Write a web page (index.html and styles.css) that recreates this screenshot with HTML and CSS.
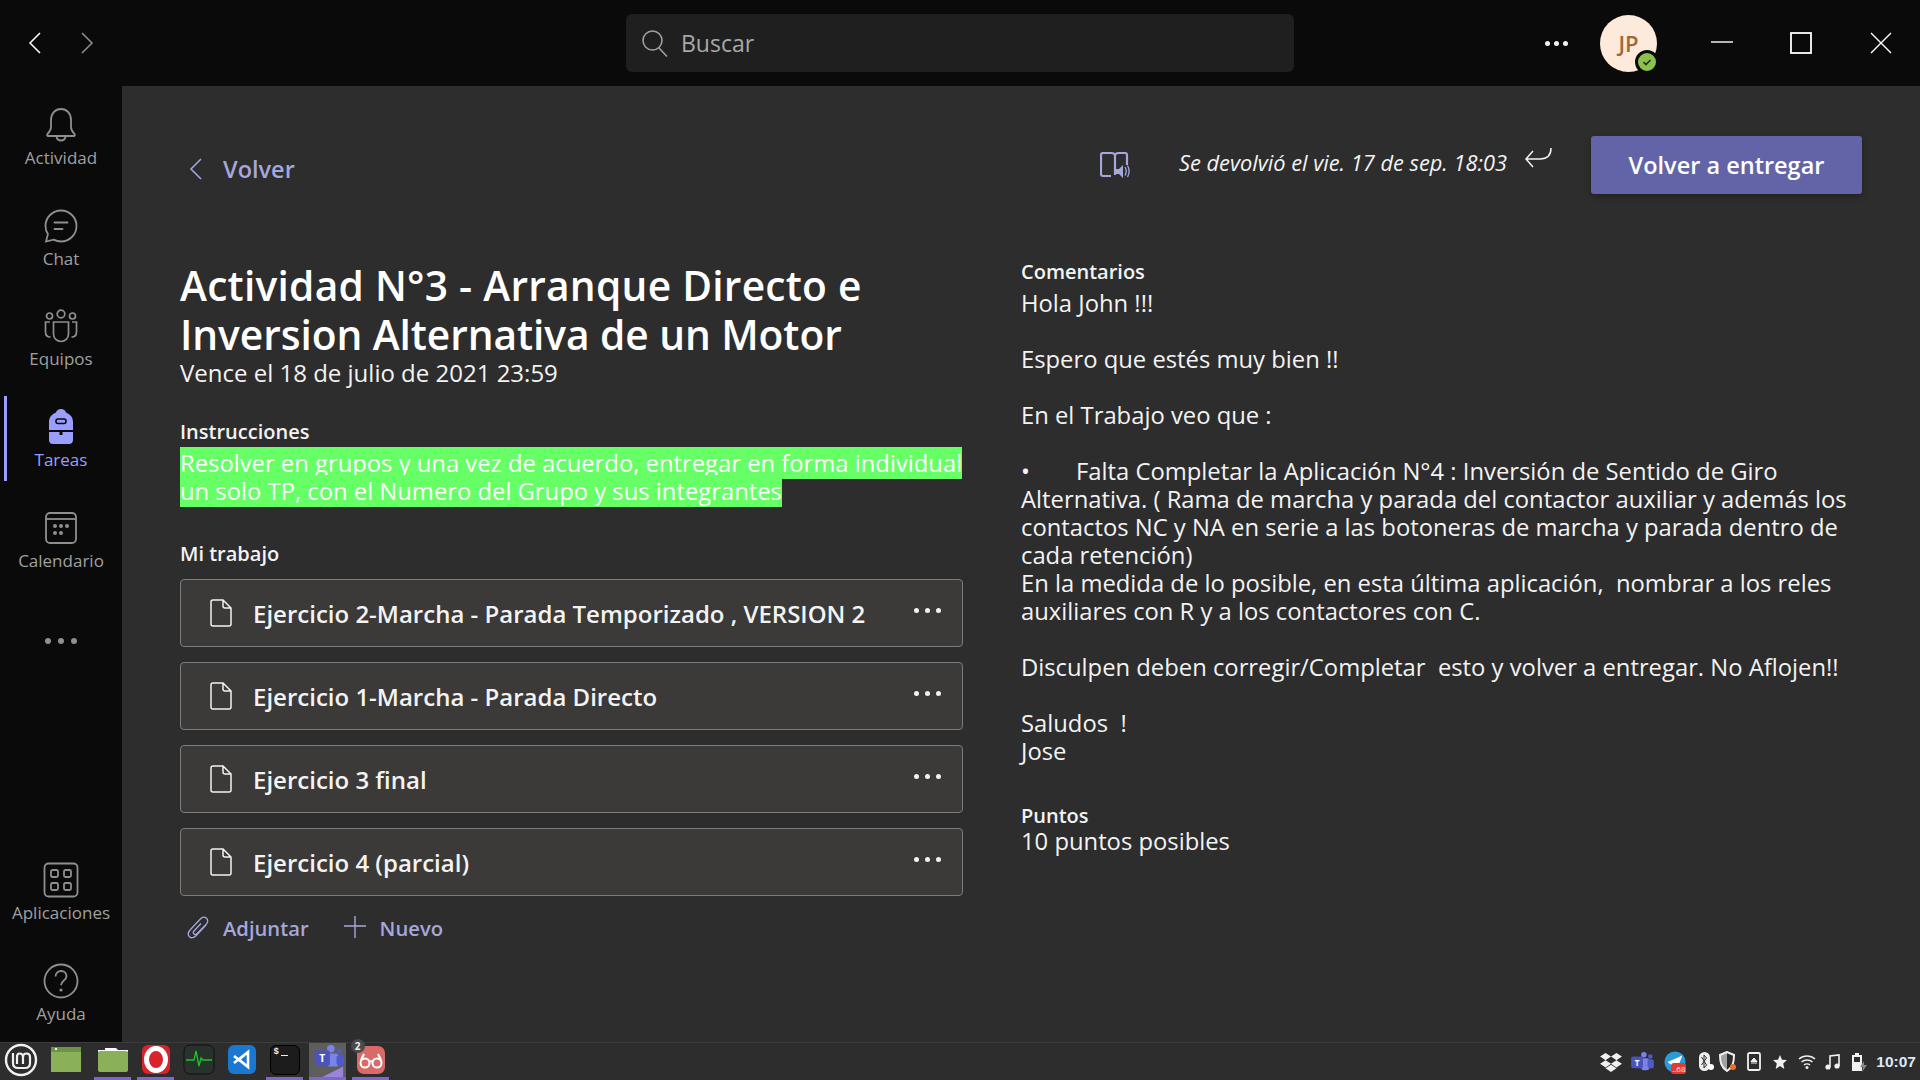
FILE: index.html
```html
<!DOCTYPE html>
<html lang="es">
<head>
<meta charset="utf-8">
<title>Tareas</title>
<link rel="stylesheet" href="styles.css">
</head>
<body>
<div class="app">
  <header class="topbar">
    <div class="history">
      <svg class="hist-ic" viewBox="0 0 14 24"><path d="M12 2 2 12l10 10" fill="none" stroke="#fff" stroke-width="1.5"/></svg>
      <svg class="hist-ic" viewBox="0 0 14 24"><path d="M2 2l10 10L2 22" fill="none" stroke="#8f8f8f" stroke-width="1.5"/></svg>
    </div>
    <div class="search">
      <svg class="search-ic" viewBox="0 0 28 28"><circle cx="11.500" cy="11.500" r="9.500" fill="none" stroke="#a0a0a0" stroke-width="1.600"/><path d="M18 19l8 8.500" stroke="#a0a0a0" stroke-width="1.600"/></svg>
      <span>Buscar</span>
    </div>
    <div class="win">
      <div class="more"><i></i><i></i><i></i></div>
      <div class="avatar">JP
        <span class="presence"><svg viewBox="0 0 12 12"><path d="M2.500 6.200 5 8.500l4.500-4.500" fill="none" stroke="#2d2d2d" stroke-width="1.700"/></svg></span>
      </div>
      <svg class="win-ic min" viewBox="0 0 22 22"><path d="M0 10h22" stroke="#fff" stroke-width="1.400"/></svg>
      <svg class="win-ic max" viewBox="0 0 22 22"><rect x="1" y="1" width="20" height="20" fill="none" stroke="#fff" stroke-width="1.800"/></svg>
      <svg class="win-ic close" viewBox="0 0 22 22"><path d="M1 1l20 20M21 1 1 21" stroke="#fff" stroke-width="1.400"/></svg>
    </div>
  </header>

  <div class="middle">
    <nav class="rail">
      <a class="rail-item">
        <svg viewBox="0 0 36 36"><path d="M18 2c-6 0-10 4.500-10 11v7c0 2.500-1.500 5-3.500 7-.8.9-.3 2 .8 2h25.400c1.100 0 1.600-1.100.8-2-2-2-3.500-4.500-3.500-7v-7c0-6.500-4-11-10-11Z" fill="none" stroke="#8f8f8f" stroke-width="1.800"/><path d="M13.500 29.500c.4 2.500 2.200 4 4.500 4s4.100-1.500 4.500-4" fill="none" stroke="#8f8f8f" stroke-width="1.800"/></svg>
        <span>Actividad</span>
      </a>
      <a class="rail-item">
        <svg viewBox="0 0 36 36"><path d="M18 2.500c8.500 0 15.500 6.800 15.500 15.500S26.500 33.500 18 33.500c-2.700 0-5.200-.7-7.400-1.900L3 33.500l1.900-7.400C3.300 23.800 2.500 21 2.500 18 2.500 9.300 9.500 2.500 18 2.500Z" fill="none" stroke="#8f8f8f" stroke-width="1.800"/><path d="M11.500 14.500h13M11.500 21h8" stroke="#8f8f8f" stroke-width="1.800" stroke-linecap="round"/></svg>
        <span>Chat</span>
      </a>
      <a class="rail-item">
        <svg viewBox="0 0 36 36"><g fill="none" stroke="#8f8f8f" stroke-width="1.700"><circle cx="18" cy="6" r="3.800"/><circle cx="6.500" cy="8" r="3"/><circle cx="29.500" cy="8" r="3"/><path d="M10.500 14h15v12c0 4.500-3.500 7.500-7.500 7.500s-7.500-3-7.500-7.500Z"/><path d="M7 14H2.500v10c0 3 2 5 5 5M29 14h4.500v10c0 3-2 5-5 5"/></g></svg>
        <span>Equipos</span>
      </a>
      <a class="rail-item active">
        <svg viewBox="0 0 36 36"><path d="M18 0c2.500 0 4.500 1.500 5 3.500 4 1.500 7 4.800 7 9.500v8H6v-8c0-4.700 3-8 7-9.500C13.500 1.500 15.500 0 18 0Z" fill="#9a9eff"/><path d="M6 23h10.500v3h3v-3H30v8c0 2.500-1.500 4-4 4H10c-2.500 0-4-1.500-4-4Z" fill="#9a9eff"/><rect x="13" y="10" width="10" height="4.500" rx="2" fill="none" stroke="#0a0a0a" stroke-width="1.600"/></svg>
        <span>Tareas</span>
      </a>
      <a class="rail-item">
        <svg viewBox="0 0 36 36"><rect x="3" y="3" width="30" height="30" rx="4" fill="none" stroke="#8f8f8f" stroke-width="1.800"/><path d="M3 9h30" stroke="#8f8f8f" stroke-width="1.800"/><g fill="#8f8f8f"><circle cx="12" cy="16" r="2"/><circle cx="18" cy="16" r="2"/><circle cx="24" cy="16" r="2"/><circle cx="12" cy="23" r="2"/><circle cx="18" cy="23" r="2"/></g></svg>
        <span>Calendario</span>
      </a>
      <div class="rail-more"><i></i><i></i><i></i></div>
      <div class="rail-bottom">
        <a class="rail-item">
          <svg viewBox="0 0 36 36"><rect x="1.500" y="1.500" width="33" height="33" rx="4" fill="none" stroke="#8f8f8f" stroke-width="1.800"/><g fill="none" stroke="#8f8f8f" stroke-width="1.800"><rect x="8" y="8" width="7" height="7" rx="1.500"/><rect x="21" y="8" width="7" height="7" rx="1.500"/><rect x="8" y="21" width="7" height="7" rx="1.500"/><rect x="21" y="21" width="7" height="7" rx="1.500"/></g></svg>
          <span>Aplicaciones</span>
        </a>
        <a class="rail-item">
          <svg viewBox="0 0 36 36"><circle cx="18" cy="18" r="16.500" fill="none" stroke="#8f8f8f" stroke-width="1.800"/><path d="M12.500 13.500c0-3 2.400-5.500 5.500-5.500s5.500 2.300 5.500 5.200c0 4.300-5.500 4.300-5.500 9" fill="none" stroke="#8f8f8f" stroke-width="1.800"/><circle cx="18" cy="27" r="1.600" fill="#8f8f8f"/></svg>
          <span>Ayuda</span>
        </a>
      </div>
    </nav>

    <main class="main">
      <div class="head">
        <a class="back">
          <svg viewBox="0 0 14 22"><path d="M12 1 2 11l10 10" fill="none" stroke="#a6a7dc" stroke-width="1.500"/></svg>
          <span>Volver</span>
        </a>
        <div class="status">
          <svg class="reader" viewBox="0 0 30 28"><path d="M1 3c0-1 .8-2 2-2h8c2 0 3.500 1 4 2 .5-1 2-2 4-2h6c1.200 0 2 1 2 2v10M15 3v20M11 24H3c-1.200 0-2-1-2-2V3" fill="none" stroke="#a6a7dc" stroke-width="2.200"/><path d="M16 17h3l4-4v13l-4-4h-3Z" fill="#a6a7dc"/><path d="M25 15c1.500 2.500 1.500 6 0 8.500M27.500 13.500c2 3.500 2 8 0 11.500" fill="none" stroke="#a6a7dc" stroke-width="1.300"/></svg>
          <em>Se devolvió el vie. 17 de sep. 18:03</em>
          <svg class="reply" viewBox="0 0 28 22"><path d="M27 1c0 7-4 11-11 11H2M9 4l-7 8 7 8" fill="none" stroke="#f2f2f2" stroke-width="1.500"/></svg>
        </div>
        <button class="primary">Volver a entregar</button>
      </div>

      <div class="columns">
        <section class="left">
          <h1><span class="title-a">Actividad N°3 - Arranque Directo e</span><br><span class="title-b">Inversion Alternativa de un Motor</span></h1>
          <p class="due">Vence el 18 de julio de 2021 23:59</p>
          <h2 class="instr">Instrucciones</h2>
          <p class="body hl"><mark>Resolver en grupos y una vez de acuerdo, entregar en forma individual</mark><br><mark>un solo TP, con el Numero del Grupo y sus integrantes</mark></p>
          <h2 class="work">Mi trabajo</h2>
          <ul class="files">
            <li class="file">
              <svg class="doc" viewBox="0 0 22 28"><path d="M1 3c0-1.200.8-2 2-2h10l8 8v16c0 1.200-.8 2-2 2H3c-1.200 0-2-.8-2-2ZM13 1v6c0 1.200.8 2 2 2h6" fill="none" stroke="#f2f2f2" stroke-width="1.500"/></svg>
              <span class="name">Ejercicio 2-Marcha - Parada Temporizado , VERSION 2</span>
              <div class="more"><i></i><i></i><i></i></div>
            </li>
            <li class="file">
              <svg class="doc" viewBox="0 0 22 28"><path d="M1 3c0-1.200.8-2 2-2h10l8 8v16c0 1.200-.8 2-2 2H3c-1.200 0-2-.8-2-2ZM13 1v6c0 1.200.8 2 2 2h6" fill="none" stroke="#f2f2f2" stroke-width="1.500"/></svg>
              <span class="name">Ejercicio 1-Marcha - Parada Directo</span>
              <div class="more"><i></i><i></i><i></i></div>
            </li>
            <li class="file">
              <svg class="doc" viewBox="0 0 22 28"><path d="M1 3c0-1.200.8-2 2-2h10l8 8v16c0 1.200-.8 2-2 2H3c-1.200 0-2-.8-2-2ZM13 1v6c0 1.200.8 2 2 2h6" fill="none" stroke="#f2f2f2" stroke-width="1.500"/></svg>
              <span class="name">Ejercicio 3 final</span>
              <div class="more"><i></i><i></i><i></i></div>
            </li>
            <li class="file">
              <svg class="doc" viewBox="0 0 22 28"><path d="M1 3c0-1.200.8-2 2-2h10l8 8v16c0 1.200-.8 2-2 2H3c-1.200 0-2-.8-2-2ZM13 1v6c0 1.200.8 2 2 2h6" fill="none" stroke="#f2f2f2" stroke-width="1.500"/></svg>
              <span class="name">Ejercicio 4 (parcial)</span>
              <div class="more"><i></i><i></i><i></i></div>
            </li>
          </ul>
          <div class="actions">
            <a class="act">
              <svg viewBox="0 0 22 24"><path d="M14 8.500 7 16c-.9 1-.8 2.200 0 3 .8.800 2 .7 2.900-.2L19 9.500c2-2.100 2-4.600.5-6.200-1.600-1.600-4-1.500-5.900.5L3.500 14.500c-2.500 2.700-2.700 5.500-1 7.200 1.700 1.700 4.200 1.300 6.500-1L19 10" fill="none" stroke="#a6a7dc" stroke-width="1.300"/></svg>
              <span>Adjuntar</span>
            </a>
            <a class="act">
              <svg viewBox="0 0 22 24"><path d="M11 1v22M0 11h22" stroke="#a6a7dc" stroke-width="1.400"/></svg>
              <span>Nuevo</span>
            </a>
          </div>
        </section>

        <section class="right">
          <h2>Comentarios</h2>
          <p class="body">Hola John !!!<br><br>Espero que estés muy bien !!<br><br>En el Trabajo veo que :<br><br><span class="bullet">•</span>Falta Completar la Aplicación N°4 : Inversión de Sentido de Giro<br>Alternativa. ( Rama de marcha y parada del contactor auxiliar y además los<br>contactos NC y NA en serie a las botoneras de marcha y parada dentro de<br>cada retención)<br>En la medida de lo posible, en esta última aplicación,&nbsp; nombrar a los reles<br>auxiliares con R y a los contactores con C.<br><br>Disculpen deben corregir/Completar&nbsp; esto y volver a entregar. No Aflojen!!<br><br>Saludos&nbsp; !<br>Jose</p>
          <h2 class="points">Puntos</h2>
          <p class="body">10 puntos posibles</p>
        </section>
      </div>
    </main>
  </div>

  <footer class="taskbar">
    <div class="launchers">
      <div class="tb tb-first"><svg viewBox="0 0 34 34"><circle cx="17" cy="17" r="15" fill="none" stroke="#f1f1f1" stroke-width="2.400"/><path d="M9 10v10c0 3 2 5 5 5h7c3 0 5-2 5-5v-6c0-2-1.500-3.500-3.500-3.500S19 12 19 14v7M19 14c0-2-1.500-3.500-3.500-3.500S13 12 13 14v7" fill="none" stroke="#f1f1f1" stroke-width="2.200"/></svg></div>
      <div class="tb tb-files"><svg viewBox="0 0 34 34"><rect x="2" y="4" width="30" height="25" fill="#8ab05a"/><rect x="2" y="4" width="30" height="5" fill="#6f9246"/><rect x="6" y="5" width="2" height="2" fill="#fff"/></svg></div>
      <div class="tb on"><svg viewBox="0 0 34 34"><path d="M9 5h11l2 2h10v2H2V7h7Z" fill="#fff"/><rect x="2" y="8" width="30" height="21" rx="2" fill="#8ab05a"/></svg></div>
      <div class="tb on"><svg viewBox="0 0 34 34"><rect x="3" y="2" width="28" height="29" rx="6" fill="#d8232a"/><ellipse cx="17" cy="16.500" rx="9.500" ry="11" fill="none" stroke="#fff" stroke-width="5"/></svg></div>
      <div class="tb"><svg viewBox="0 0 34 34"><rect x="2" y="2" width="30" height="29" rx="6" fill="#26322a" stroke="#111"/><path d="M4 17h8l2-9 3 15 2-8 2 2h9" fill="none" stroke="#22c42c" stroke-width="1.300"/></svg></div>
      <div class="tb"><svg viewBox="0 0 34 34"><rect x="3" y="2" width="28" height="29" rx="6" fill="#1a78d0"/><path d="M23 9v15l-9-7.500ZM23 9l-14 11M23 24 9 13" fill="none" stroke="#fff" stroke-width="2.600"/></svg></div>
      <div class="tb on"><div class="term"><b>$</b><u></u></div></div>
      <div class="tb on tb-active"><svg viewBox="0 0 36 36"><circle cx="21" cy="6" r="4" fill="#7b83eb"/><circle cx="30" cy="9" r="3" fill="#5059c9"/><rect x="17" y="11" width="12" height="14" rx="3" fill="#7b83eb"/><rect x="27" y="13" width="8" height="11" rx="3" fill="#5059c9"/><rect x="4" y="8" width="16" height="16" rx="2" fill="#4b53bc"/><text x="12" y="20.500" class="tb-t">T</text><path d="M12 36l22-11v11Z" fill="#9a84d8"/></svg></div>
      <div class="tb on"><div class="glasses"><svg viewBox="0 0 34 34"><rect x="3" y="3" width="28" height="28" rx="7" fill="#d86a6a"/><g fill="none" stroke="#fff" stroke-width="2"><circle cx="11" cy="20" r="4.500"/><circle cx="23" cy="20" r="4.500"/><path d="M15 19c1.500-1 2.500-1 4 0M7 17l3-6M27 17l-3-6"/></g></svg><span class="count">2</span></div></div>
    </div>
    <div class="tray">
      <svg class="t-drop" viewBox="0 0 24 22"><path d="M6 1 0 5l6 4 6-4Zm12 0-6 4 6 4 6-4ZM0 13l6 4 6-4-6-4Zm24 0-6-4-6 4 6 4ZM6 18l6 4 6-4-6-4Z" fill="#f1f1f1"/></svg>
      <svg class="t-teams" viewBox="0 0 26 22"><circle cx="14" cy="3" r="3" fill="#7b83eb"/><circle cx="21" cy="5" r="2.500" fill="#5059c9"/><rect x="11" y="7" width="9" height="13" rx="3" fill="#7b83eb"/><rect x="18" y="8" width="7" height="10" rx="3" fill="#5059c9"/><rect x="0" y="5" width="13" height="13" rx="2" fill="#4b53bc"/><text x="6.500" y="15" class="t-t">T</text></svg>
      <div class="t-tele"><svg viewBox="0 0 24 24"><circle cx="12" cy="12" r="11.500" fill="#2a9bd8"/><path d="M4 12 20 5l-5 13-3-4-2 3Z" fill="#fff"/></svg><span>..68</span></div>
      <svg class="t-bt" viewBox="0 0 16 22"><rect x="1" y="1" width="11" height="19" rx="5.500" fill="#eee"/><path d="M3.500 6l5 8-2.500 3V4l2.500 3-5 7" fill="none" stroke="#2d2d2d" stroke-width="1"/><circle cx="13" cy="16" r="3" fill="#fff"/></svg>
      <svg class="t-shield" viewBox="0 0 18 22"><path d="M8 1 1 4c0 7 1 12 7 16 6-4 7-9 7-16Z" fill="none" stroke="#eee" stroke-width="2"/><path d="M8 1v19C2 16 1 11 1 4Z" fill="#eee" opacity=".6"/><circle cx="14" cy="16" r="3" fill="#f0702a"/></svg>
      <svg class="t-ej" viewBox="0 0 14 20"><rect x="1" y="1" width="12" height="17" rx="1.500" fill="none" stroke="#f1f1f1" stroke-width="1.800"/><path d="M7 6 4 9.500h6ZM4 11h6" fill="#f1f1f1" stroke="#f1f1f1"/></svg>
      <svg class="t-star" viewBox="0 0 14 14"><path d="M7 0l2 4.700 5 .4-3.800 3.300L11.300 14 7 11l-4.300 3 1.100-5.600L0 5.100l5-.4Z" fill="#f1f1f1"/></svg>
      <svg class="t-wifi" viewBox="0 0 18 14"><g fill="none" stroke="#eee" stroke-width="1.500"><path d="M1 4c4.500-4 11.500-4 16 0M3.500 7c3-2.700 8-2.700 11 0M6 10c1.600-1.300 4.400-1.300 6 0"/></g><circle cx="9" cy="12.500" r="1.500" fill="#eee"/></svg>
      <svg class="t-music" viewBox="0 0 16 16"><path d="M5 13V2l9-1v11" fill="none" stroke="#f1f1f1" stroke-width="1.600"/><circle cx="3" cy="13" r="2.600" fill="#f1f1f1"/><circle cx="12" cy="12" r="2.600" fill="#f1f1f1"/></svg>
      <svg class="t-bat" viewBox="0 0 16 20"><path d="M4 1h4v2h3v16H1V3h3Z" fill="#f1f1f1"/><path d="M3 5h6v12H3Z" fill="#2d2d2d"/><path d="M3 10h6v7H3Z" fill="#f1f1f1"/><path d="M13 9l-4 6h3l-1 5 5-7h-3Z" fill="#8a8a8a"/></svg>
      <time class="clock">10:07</time>
    </div>
  </footer>
</div>
</body>
</html>
```

FILE: styles.css
```css
* { box-sizing: border-box; }
html, body { margin: 0; height: 100%; }
body { font-family: "Open Sans", "Noto Sans", sans-serif; color: #f3f3f3; background: #0a0a0a; overflow: hidden; }
a { display: flex; }
h1, h2, p, ul { margin: 0; padding: 0; }
ul { list-style: none; }
i { display: block; }

.app { display: flex; flex-direction: column; height: 1080px; }

/* top bar */
.topbar { height: 86px; flex: none; background: #0a0a0a; display: flex; align-items: center; position: relative; }
.history { width: 626px; display: flex; padding-left: 28px; gap: 38px; align-items: center; }
.hist-ic { width: 14px; height: 24px; }
.search { width: 668px; height: 58px; border-radius: 6px; background: #1f1f1f; display: flex; align-items: center; padding-left: 15px; gap: 12px; color: #a8a8a8; font-size: 23px; }
.search-ic { width: 28px; height: 28px; }
.win { flex: 1; display: flex; align-items: center; padding-left: 251px; }
.more { display: flex; gap: 4px; }
.more i { width: 5px; height: 5px; border-radius: 50%; background: #f2f2f2; }
.avatar { width: 57px; height: 57px; margin-left: 32px; border-radius: 50%; background: #fdeadb; color: #9c6b3c; font-size: 22px; font-weight: 600; display: flex; align-items: center; justify-content: center; position: relative; }
.presence { position: absolute; right: -2px; bottom: -2px; width: 24px; height: 24px; border: 3px solid #0a0a0a; border-radius: 50%; background: #8bc34a; display: flex; align-items: center; justify-content: center; }
.presence svg { width: 12px; height: 12px; }
.win-ic { width: 22px; height: 22px; }
.min { margin-left: 54px; }
.max { margin-left: 57px; }
.close { margin-left: 58px; }

/* middle */
.middle { flex: 1; display: flex; min-height: 0; }
.rail { width: 122px; flex: none; background: #0a0a0a; display: flex; flex-direction: column; align-items: stretch; padding-top: 21px; gap: 38.700px; }
.rail-item { height: 62px; flex-direction: column; align-items: center; justify-content: space-between; color: #a0a0a0; font-size: 17px; line-height: 22px; position: relative; }
.rail-item svg { width: 36px; height: 36px; }
.rail-item.active { color: #9a9eff; }
.rail-item.active::before { content: ""; position: absolute; left: 4px; top: -13px; bottom: -10px; width: 3px; background: #9a9eff; }
.rail-more { display: flex; justify-content: center; gap: 7px; padding-top: 28px; }
.rail-more i { width: 6px; height: 6px; border-radius: 50%; background: #8f8f8f; }
.rail-bottom { margin-top: auto; display: flex; flex-direction: column; gap: 39px; padding-bottom: 17px; }

.main { flex: 1; background: #2d2d2d; padding: 50px 58px 0; min-width: 0; }
.head { display: flex; align-items: center; height: 58px; }
.back { align-items: center; gap: 20px; color: #a6a7dc; font-size: 23.500px; font-weight: 600; padding-left: 9px; padding-top: 7px; }
.back svg { width: 14px; height: 22px; }
.status { margin-left: auto; display: flex; align-items: center; padding-bottom: 6px; font-size: 21.800px; }
.status em { margin-left: 49px; }
.reader { width: 30px; height: 28px; margin-top: 8px; }
.reply { width: 28px; height: 22px; margin-left: 17px; margin-bottom: 8px; }
.primary { margin-left: 39px; width: 271px; height: 58px; border: 0; border-radius: 3px; background: #6264a7; color: #fff; font: 600 23.500px "Open Sans", sans-serif; box-shadow: 0 2px 6px rgba(0,0,0,.3); }

.columns { display: grid; grid-template-columns: 783px 1fr; column-gap: 58px; margin-top: 67px; }
h1 { font-size: 40.700px; line-height: 49px; font-weight: 600; color: #fff; white-space: nowrap; }
.title-a { letter-spacing: .25px; }
.title-b { letter-spacing: -.07px; }
h2 { font-size: 20px; line-height: 28px; font-weight: 600; }
.due { font-size: 24px; line-height: 28px; }
.body { font-size: 23.800px; line-height: 28px; white-space: nowrap; }
.instr { margin-top: 31px; }
.hl { margin-top: 3px; }
mark { background: #66ff66; color: #fff; }
.work { margin-top: 35px; }
.files { margin-top: 11px; display: flex; flex-direction: column; gap: 15px; }
.file { height: 68px; border: 1px solid #7c7c7c; border-radius: 4px; background: #3b3a39; display: flex; align-items: center; padding: 0 21px 0 29px; }
.doc { width: 22px; height: 28px; flex: none; }
.name { margin-left: 21px; font-size: 24px; font-weight: 600; white-space: nowrap; }
.file .more { margin-left: auto; margin-bottom: 6px; gap: 6px; }
.actions { display: flex; margin-top: 18px; padding-left: 7px; gap: 35px; }
.act { align-items: center; color: #a6a7dc; font-size: 20.200px; font-weight: 600; gap: 14px; }
.act svg { width: 22px; height: 24px; margin-bottom: 3px; }

.right h2 { line-height: 22px; padding-bottom: 6px; }
.bullet { display: inline-block; width: 55px; }
.right .points { margin-top: 39px; padding-bottom: 0; line-height: 23px; }

/* taskbar */
.taskbar { height: 38px; flex: none; background: #2d2d2d; border-top: 1px solid #3c3c3c; display: flex; justify-content: space-between; }
.launchers { display: flex; gap: 6px; padding-left: 8px; }
.tb { width: 37px; display: flex; align-items: center; justify-content: center; padding-bottom: 3px; position: relative; }
.tb-first { margin-left: -8px; width: 45px; }
.tb-first svg { margin-right: 4px; }
.tb svg { width: 34px; height: 34px; flex: none; }
.tb-files svg { margin-left: -7px; }
.tb.on { border-bottom: 3px solid #7d68c4; padding-bottom: 0; }
.tb-active { background: #5e5e5e; }
.tb-t { font: 700 11px "Open Sans", sans-serif; fill: #fff; text-anchor: middle; }
.term { width: 30px; height: 30px; border-radius: 6px; background: #1c1c1c; border: 1px solid #000; color: #eee; font: 700 9px/1 "Liberation Mono", monospace; padding: 2px 3px; display: flex; gap: 2px; align-items: flex-start; }
.term u { display: block; width: 7px; height: 1px; background: #eee; margin-top: 7px; }
.glasses { position: relative; display: flex; }
.count { position: absolute; left: -3px; top: -4px; width: 14px; height: 14px; border-radius: 50%; background: #4a4a4a; color: #eee; font-size: 10px; line-height: 14px; text-align: center; font-weight: 700; }
.tray { display: flex; align-items: center; padding-right: 4px; }
.t-drop { width: 22px; height: 20px; }
.t-teams { width: 24px; height: 20px; margin-left: 9px; }
.t-t { font: 700 9px "Open Sans", sans-serif; fill: #fff; text-anchor: middle; }
.t-tele { width: 22px; height: 22px; margin-left: 9px; position: relative; }
.t-tele svg { width: 22px; height: 22px; display: block; }
.t-tele span { position: absolute; right: 0; bottom: -1px; width: 15px; height: 11px; background: #e53935; border-radius: 3px; color: #eee; font-size: 8px; line-height: 11px; text-align: center; }
.t-bt { width: 16px; height: 22px; margin-left: 12px; }
.t-shield { width: 18px; height: 22px; margin-left: 5px; }
.t-ej { width: 14px; height: 20px; margin-left: 10px; }
.t-star { width: 14px; height: 14px; margin-left: 12px; }
.t-wifi { width: 18px; height: 14px; margin-left: 11px; }
.t-music { width: 16px; height: 16px; margin-left: 9px; }
.t-bat { width: 16px; height: 20px; margin-left: 10px; }
.clock { margin-left: 9px; font: 700 15.500px "Liberation Sans", sans-serif; color: #dbe9fb; }
```
